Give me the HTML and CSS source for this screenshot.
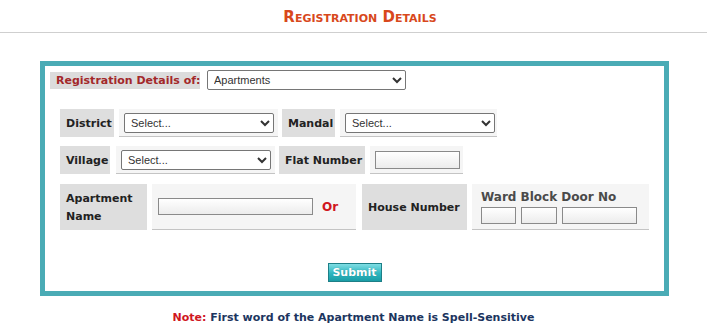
FILE: index.html
```html
<!DOCTYPE html>
<html>
<head>
<meta charset="utf-8">
<link rel="stylesheet" href="styles.css">
</head>
<body>
<header class="head"><h1 class="title">Registration Details</h1></header>
<section class="box">
  <div class="row1">
    <span class="lbl1">Registration Details of:</span>
    <select class="sel sel-wide"><option>Apartments</option></select>
  </div>
  <div class="row r2">
    <div class="lbl w-district">District</div>
    <div class="val v-district"><select class="sel"><option>Select...</option></select></div>
    <div class="lbl w-mandal">Mandal</div>
    <div class="val v-mandal"><select class="sel"><option>Select...</option></select></div>
  </div>
  <div class="row r3">
    <div class="lbl w-village">Village</div>
    <div class="val v-village"><select class="sel"><option>Select...</option></select></div>
    <div class="lbl w-flat">Flat Number</div>
    <div class="val v-flat"><input class="inp inp-flat" type="text"></div>
  </div>
  <div class="row r4">
    <div class="lbl w-apt">Apartment<br>Name</div>
    <div class="val v-apt"><input class="inp inp-apt" type="text"><span class="or">Or</span></div>
    <div class="lbl w-house">House Number</div>
    <div class="val v-ward">
      <div class="ward-head">Ward Block Door No</div>
      <div class="ward-inputs">
        <input class="inp inp-ward" type="text">
        <input class="inp inp-block" type="text">
        <input class="inp inp-door" type="text">
      </div>
    </div>
  </div>
  <div class="submit-row"><button class="submit" type="button">Submit</button></div>
</section>
<p class="note"><span class="note-key">Note:</span> First word of the Apartment Name is Spell-Sensitive</p>
</body>
</html>
```
FILE: styles.css
```css
html, body { margin: 0; padding: 0; background: #fff; }
body { font-family: "DejaVu Sans", Verdana, sans-serif; width: 707px; }

.head { height: 32px; border-bottom: 1px solid #cfcfcf; display: flex; justify-content: center; }
.title {
  margin: 0; padding: 9px 0 0 13px;
  font: bold 15px/17px "DejaVu Sans", sans-serif;
  font-variant: small-caps;
  color: #d8481c;
}

.box {
  margin: 28px 0 0 40px;
  width: 619px; height: 225px;
  border: 5px solid #4aabb5;
  display: flex; flex-direction: column;
}

.row1 { display: flex; align-items: center; gap: 7px; margin: 4px 0 0 5px; height: 20px; }
.lbl1 {
  background: #dcdcdc; color: #a3282a;
  font: bold 11px/17px "DejaVu Sans", sans-serif;
  padding: 0 5px 0 6px; width: 139px; white-space: nowrap;
}
.sel {
  font: 11px "Liberation Sans", Arial, sans-serif; color: #333;
  height: 20px; width: 150px; background: #fff;
  border: 1px solid #767676; border-radius: 2px; padding: 0 2px;
}
.sel-wide { width: 199px; }

.row { display: flex; margin-left: 15px; gap: 5px; }
.r2 { margin-top: 19px; height: 28px; }
.r3 { margin-top: 9px; height: 28px; }
.r4 { margin-top: 10px; height: 46px; }

.lbl {
  background: #dedede; color: #222;
  font: bold 11px/18px "DejaVu Sans", sans-serif;
  display: flex; align-items: center; padding: 2px 0 0 6px; box-sizing: border-box;
  white-space: nowrap;
}
.val {
  background: #f5f5f5; border-bottom: 1px solid #c4c4c4;
  display: flex; align-items: center; box-sizing: border-box;
}
.w-district { width: 54px; }
.v-district { width: 159px; padding-left: 5px; }
.w-mandal { width: 53px; margin-left: -1px; }
.v-mandal { width: 157px; padding-left: 5px; }
.w-village { width: 50px; }
.v-village { width: 159px; padding-left: 5px; margin-left: 1px; }
.w-flat { width: 86px; margin-left: -1px; }
.v-flat { width: 93px; padding-left: 5px; }
.w-apt { width: 87px; }
.v-apt { width: 204px; padding-left: 6px; }
.w-house { width: 105px; margin-left: 1px; }
.v-ward { width: 177px; padding-left: 9px; flex-direction: column; align-items: flex-start; justify-content: flex-start; }

.inp {
  box-sizing: border-box; margin: 0; padding: 0 3px;
  border: 1px solid #8a8a8a; border-radius: 0;
  background: linear-gradient(#ffffff, #ececec);
  font: 11px "Liberation Sans", sans-serif;
}
.inp-flat { width: 85px; height: 18px; }
.inp-apt { width: 155px; height: 17px; }
.or { color: #d0161e; font: bold 12px "DejaVu Sans", sans-serif; margin-left: 9px; }

.ward-head { color: #4a4a4a; font: bold 12px/14px "DejaVu Sans", sans-serif; margin-top: 6px; }
.ward-inputs { display: flex; gap: 5px; margin-top: 3px; }
.inp-ward { width: 35px; height: 17px; }
.inp-block { width: 36px; height: 17px; }
.inp-door { width: 75px; height: 17px; }

.submit-row { display: flex; justify-content: center; margin-top: 33px; }
.submit {
  width: 54px; height: 19px; padding: 0;
  border: 1px solid #1d7f87; border-radius: 0;
  background: linear-gradient(#7fdde3, #2db6bf 55%, #1a9da6);
  color: #fff; font: bold 11px "DejaVu Sans", sans-serif;
  text-shadow: 0 0 1px rgba(0,0,0,0.25);
}

.note {
  margin: 15px 0 0; text-align: center;
  font: bold 11px/14px "DejaVu Sans", sans-serif; color: #1c3560;
}
.note-key { color: #d0161e; }
```
